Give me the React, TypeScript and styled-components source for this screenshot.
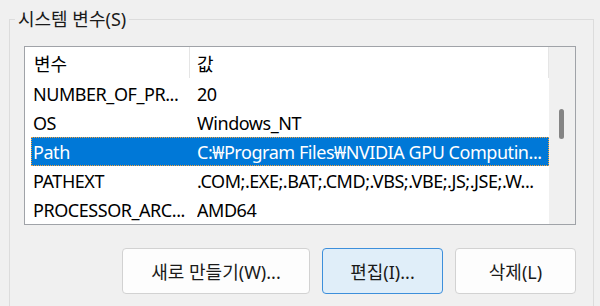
import styled, { createGlobalStyle } from "styled-components";

const GlobalStyle = createGlobalStyle`
  html, body {
    margin: 0;
    padding: 0;
    background: #f0f0f0;
    overflow: hidden;
  }
  body {
    font-family: "Noto Sans", "Noto Sans CJK KR", sans-serif;
    font-size: 18px;
    color: #000;
  }
`;

const Page = styled.div`
  width: 600px;
  height: 306px;
  padding: 19px 0 0 9px;
  box-sizing: border-box;
  overflow: hidden;
`;

// the group box runs on below the bottom edge of the window
const Group = styled.div`
  position: relative;
  width: 585px;
  height: 300px;
  box-sizing: border-box;
  border: 1px solid #dcdcdc;
  padding: 26px 17px 0 14px;
`;

// legend sits over the group border, like a real group box caption
const Legend = styled.div`
  position: absolute;
  top: -12px;
  left: 5px;
  padding: 0 3px;
  background: #f0f0f0;
  line-height: 22px;
  color: #1a1a1a;
`;

const ListBox = styled.div`
  display: flex;
  width: 552px;
  height: 179px;
  box-sizing: border-box;
  border: 1px solid #a0a3a8;
  background: #fff;
  overflow: hidden;
`;

const Table = styled.div`
  flex: 1;
  min-width: 0;
  display: flex;
  flex-direction: column;
`;

const Header = styled.div`
  display: flex;
  height: 32px;
  flex-shrink: 0;
`;

const HeaderCell = styled.div<{ width?: number; pad: number }>`
  width: ${(p) => (p.width ? `${p.width}px` : "auto")};
  flex: ${(p) => (p.width ? "none" : "1")};
  padding-left: ${(p) => p.pad}px;
  box-sizing: border-box;
  display: flex;
  align-items: center;
  border-right: 1px solid #e5e5e5;
  height: 31px;
`;

const Row = styled.div<{ selected?: boolean }>`
  display: flex;
  align-items: center;
  height: 29px;
  flex-shrink: 0;
  margin-left: 6px;
  padding-left: 2px;
  padding-top: 1px;
  box-sizing: border-box;
  white-space: nowrap;
  letter-spacing: -0.45px;
  background: ${(p) => (p.selected ? "#0078d7" : "transparent")};
  color: ${(p) => (p.selected ? "#fff" : "#000")};
  outline: ${(p) => (p.selected ? "1px dotted #f5a23c" : "none")};
  outline-offset: -1px;
`;

const NameCell = styled.div`
  width: 164px;
  flex-shrink: 0;
  overflow: hidden;
`;

const ValueCell = styled.div`
  flex: 1;
  min-width: 0;
  overflow: hidden;
`;

const ScrollBar = styled.div`
  width: 26px;
  flex-shrink: 0;
  background: #f0f0f0;
  position: relative;
`;

const Thumb = styled.div`
  position: absolute;
  left: 10px;
  top: 62px;
  width: 5px;
  height: 30px;
  border-radius: 3px;
  background: #858585;
`;

const ButtonRow = styled.div`
  display: flex;
  justify-content: flex-end;
  gap: 12px;
  margin-top: 23px;
  width: 552px;
`;

const Button = styled.button<{ width: number; focused?: boolean }>`
  width: ${(p) => p.width}px;
  height: 46px;
  box-sizing: border-box;
  border-radius: 4px;
  border: 1px solid ${(p) => (p.focused ? "#3d8fdb" : "#d2d2d2")};
  background: ${(p) => (p.focused ? "#e0eef9" : "#fdfdfd")};
  font-family: inherit;
  font-size: 18px;
  color: #1a1a1a;
  padding: 0;
`;

const rows = [
  { name: "NUMBER_OF_PR...", value: "20" },
  { name: "OS", value: "Windows_NT" },
  { name: "Path", value: "C:₩Program Files₩NVIDIA GPU Computin...", selected: true },
  { name: "PATHEXT", value: ".COM;.EXE;.BAT;.CMD;.VBS;.VBE;.JS;.JSE;.W..." },
  { name: "PROCESSOR_ARC...", value: "AMD64" },
];

export default function App() {
  return (
    <>
      <GlobalStyle />
      <Page>
        <Group>
          <Legend>시스템 변수(S)</Legend>
          <ListBox>
            <Table>
              <Header>
                <HeaderCell width={165} pad={9}>변수</HeaderCell>
                <HeaderCell pad={7}>값</HeaderCell>
              </Header>
              {rows.map((r) => (
                <Row key={r.name} selected={r.selected}>
                  <NameCell>{r.name}</NameCell>
                  <ValueCell>{r.value}</ValueCell>
                </Row>
              ))}
            </Table>
            <ScrollBar>
              <Thumb />
            </ScrollBar>
          </ListBox>
          <ButtonRow>
            <Button width={188}>새로 만들기(W)...</Button>
            <Button width={121} focused>
              편집(I)...
            </Button>
            <Button width={121}>삭제(L)</Button>
          </ButtonRow>
        </Group>
      </Page>
    </>
  );
}
